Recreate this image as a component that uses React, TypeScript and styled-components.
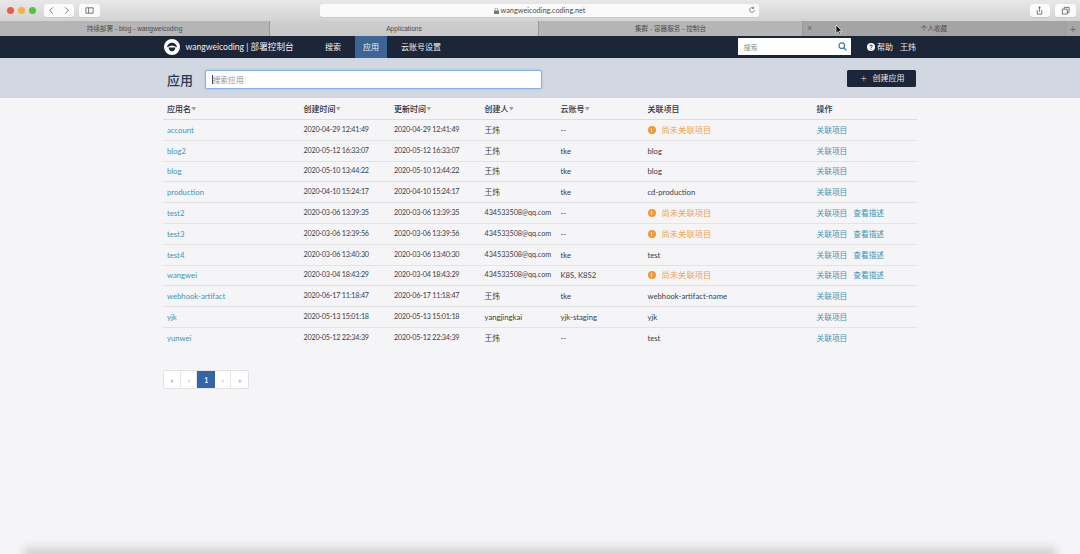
import React from 'react';
import styled, { createGlobalStyle } from 'styled-components';

const Global = createGlobalStyle`
  html, body { margin: 0; padding: 0; height: 100%; background: #f5f4f7; overflow: hidden; }
  #root { height: 100%; }
`;
const FONT = `Lato, "Noto Sans CJK SC", sans-serif`;

const Page = styled.div`
  position: relative; width: 1080px; height: 554px; overflow: hidden;
  display: flex; flex-direction: column; background: #f5f4f7; font-family: ${FONT}; color: #33383e;
`;
const Toolbar = styled.div`
  height: 21px; flex: none; display: flex; align-items: center; position: relative;
  background: linear-gradient(#e9e8e9, #d4d3d4); padding-left: 7px;
`;
const Light = styled.span<{ $c: string }>`
  width: 7px; height: 7px; border-radius: 50%; background: ${p => p.$c}; margin-right: 4px; flex: none;
`;
const ChromeBtn = styled.span<{ $w?: number; $ml?: number; $mr?: number; $r?: string }>`
  width: ${p => p.$w ?? 14.5}px; height: 12.5px; margin-left: ${p => p.$ml ?? 0}px; margin-right: ${p => p.$mr ?? 0}px;
  background: #fbfbfb; border-radius: ${p => p.$r ?? '2.5px'}; box-shadow: 0 0.5px 0.5px #b8b8b8;
  display: flex; align-items: center; justify-content: center; flex: none;
`;
const UrlBar = styled.div`
  position: absolute; left: 320px; top: 4px; width: 439px; height: 13px; background: #fafafa; border-radius: 2.5px;
  box-shadow: 0 0.5px 0.5px #bdbdbd; display: flex; align-items: center; justify-content: center; gap: 2px;
  font-size: 7.3px; color: #4e4e4e; font-family: Lato, sans-serif;
`;
const Reload = styled.span`
  position: absolute; right: 3px; top: 2px; display: flex;
`;
const RightBtns = styled.div`
  margin-left: auto; display: flex; gap: 5px; padding-right: 4px;
`;
const Tabs = styled.div`
  height: 15px; flex: none; display: flex; background: #b4b3b4; box-sizing: border-box;
`;
const Tab = styled.div<{ $w: number; $active?: boolean; $dark?: boolean }>`
  position: relative; width: ${p => p.$w}px; flex: none; display: flex; align-items: center; justify-content: center;
  font-size: 6.6px; line-height: 10px; color: #4c4c4c; font-family: "Liberation Sans", "Noto Sans CJK SC", sans-serif;
  background: ${p => p.$active ? 'linear-gradient(#cfcecf, #c8c7c8)' : p.$dark ? '#a5a4a5' : '#b6b5b6'};
  border-right: 0.5px solid #9c9b9c; box-sizing: border-box;
`;
const TabClose = styled.span`
  position: absolute; left: 4px; font-size: 9px; color: #666; line-height: 1;
`;
const NewTab = styled.div`
  flex: 1; display: flex; align-items: center; justify-content: center; background: #a8a7a8; color: #6d6d6d; font-size: 11px; line-height: 1;
`;
const Nav = styled.nav`
  height: 21.5px; flex: none; background: #1b2638; display: flex; align-items: stretch; gap: 6px; padding-left: 163px; color: #fff;
`;
const Brand = styled.div`
  display: flex; align-items: center; gap: 5.5px; font-size: 8.6px; line-height: 10px; width: 148px; flex: none; color: #eef0f3; padding-left: 1px; box-sizing: border-box;
`;
const NavItem = styled.div<{ $active?: boolean }>`
  display: flex; align-items: center; font-size: 8px; padding: 0 8px; line-height: 10px;
  background: ${p => p.$active ? '#3c6595' : 'transparent'}; color: #eef0f3; 
`;
const NavRight = styled.div`
  margin-left: auto; display: flex; align-items: center; padding-right: 164px; font-size: 8px; line-height: 10px; color: #eef0f3;
`;
const NavSearch = styled.div`
  width: 113px; height: 17px; background: #fff; display: flex; align-items: center; justify-content: space-between;
  padding: 0 4px 0 6px; box-sizing: border-box; color: #8d9096; font-size: 7px; margin-right: 16.5px;
`;
const Help = styled.span`
  display: flex; align-items: center; gap: 2px; margin-right: 7px;
`;
const SubHeader = styled.div`
  height: 40.5px; flex: none; box-sizing: border-box; background: #d1d8e1; display: flex; align-items: flex-start; padding: 12.5px 164px 0 167px;
`;
const Title = styled.h1`
  margin: 2px 0 0; font-size: 13px; line-height: 16px; font-weight: 500; color: #2b3a50; width: 38px; flex: none; 
`;
const SearchBox = styled.div`
  width: 337px; height: 19px; box-sizing: border-box; background: #fff; border: 1px solid #84b1e6; border-radius: 2px; 
  box-shadow: 0 0 2px #84b1e6; font-size: 7.8px; line-height: 10px; color: #90939a; display: flex; align-items: center; padding-left: 6px;
`;
const Caret = styled.span`
  width: 0.5px; height: 9px; background: #444;
`;
const CreateBtn = styled.button`
  margin: -0.5px 0 0 auto; width: 69px; height: 17px; background: #1b2638; border: 0; border-radius: 1.5px; color: #e6e8eb;
  font: 8px/10px ${FONT}; display: flex; align-items: center; justify-content: center; gap: 5.5px; padding: 0 0 0 2px;
`;
const Plus = styled.span`
  font-size: 11px; font-weight: 300;
`;
const Table = styled.div`
  margin: 0 163px;
`;
const Cols = '136.5px 90.5px 90.5px 76px 87px 169px 1fr';
const HeadRow = styled.div`
  display: grid; grid-template-columns: ${Cols}; height: 22px; align-items: center; border-bottom: 1.5px solid #dcdcdf;
  box-sizing: border-box; font-size: 8px; color: #2e3238; font-weight: 500;
`;
const Row = styled.div`
  display: grid; grid-template-columns: ${Cols}; height: 20.8px; align-items: center; border-bottom: 1px solid #e3e3e6;
  box-sizing: border-box; font-size: 7.7px; color: #3d4045;
  &:last-child { border-bottom: 0; }
`;
const Cell = styled.div<{ $compact?: boolean }>`
  padding-left: 4px; white-space: nowrap; display: flex; align-items: center; line-height: 10px;
  ${p => p.$compact ? 'font-size: 7.2px;' : ''}
`;
const DateCell = styled(Cell)`
  font-size: 7.2px; letter-spacing: -0.2px;
`;
const Sort = styled.span`
  font-size: 4.5px; color: #9a9da3; margin-left: 0.5px; margin-top: 1.5px;
`;
const Link = styled.a`
  color: #3f94b4; text-decoration: none; & + & { margin-left: 6px; }
`;
const Warn = styled.span`
  color: #f1a44c; display: flex; align-items: center; gap: 6px; font-size: 8.3px;
`;
const WarnDot = styled.span`
  width: 8px; height: 8px; border-radius: 50%; background: #ef9a35; color: #fff; font-size: 6px; font-weight: 700;
  display: flex; align-items: center; justify-content: center; line-height: 1;
`;
const Pager = styled.div`
  display: flex; margin: 21.5px 0 0 163px; width: 86px; height: 19px; background: #fff; border: 0.5px solid #e2e2e5; border-radius: 2px; box-sizing: border-box;
`;
const PageItem = styled.span<{ $active?: boolean; $w: number }>`
  width: ${p => p.$w}px; display: flex; align-items: center; justify-content: center; font-size: 7px;
  color: ${p => p.$active ? '#eaf0f7' : '#8a8c92'}; background: ${p => p.$active ? '#3465a4' : 'transparent'};
  font-weight: ${p => p.$active ? 700 : 400}; border-right: ${p => p.$active ? 0 : '0.5px solid #e6e6e8'};
  &:last-child { border-right: 0; }
`;
const BottomShadow = styled.div`
  position: absolute; left: 24px; right: 24px; bottom: -8px; height: 14px; background: #d0d0d0; filter: blur(5px);
`;
const Cursor = styled.svg`
  position: absolute; left: 835px; top: 24px;
`;

type R = { name: string; c: string; u: string; by: string; acc: string; proj: string | null; desc?: boolean };
const rows: R[] = [
  { name: 'account', c: '2020-04-29 12:41:49', u: '2020-04-29 12:41:49', by: '王炜', acc: '--', proj: null },
  { name: 'blog2', c: '2020-05-12 16:33:07', u: '2020-05-12 16:33:07', by: '王炜', acc: 'tke', proj: 'blog' },
  { name: 'blog', c: '2020-05-10 13:44:22', u: '2020-05-10 13:44:22', by: '王炜', acc: 'tke', proj: 'blog' },
  { name: 'production', c: '2020-04-10 15:24:17', u: '2020-04-10 15:24:17', by: '王炜', acc: 'tke', proj: 'cd-production' },
  { name: 'test2', c: '2020-03-06 13:39:35', u: '2020-03-06 13:39:35', by: '434533508@qq.com', acc: '--', proj: null, desc: true },
  { name: 'test3', c: '2020-03-06 13:39:56', u: '2020-03-06 13:39:56', by: '434533508@qq.com', acc: '--', proj: null, desc: true },
  { name: 'test4', c: '2020-03-06 13:40:30', u: '2020-03-06 13:40:30', by: '434533508@qq.com', acc: 'tke', proj: 'test', desc: true },
  { name: 'wangwei', c: '2020-03-04 18:43:29', u: '2020-03-04 18:43:29', by: '434533508@qq.com', acc: 'K8S, K8S2', proj: null, desc: true },
  { name: 'webhook-artifact', c: '2020-06-17 11:18:47', u: '2020-06-17 11:18:47', by: '王炜', acc: 'tke', proj: 'webhook-artifact-name' },
  { name: 'yjk', c: '2020-05-13 15:01:18', u: '2020-05-13 15:01:18', by: 'yangjingkai', acc: 'yjk-staging', proj: 'yjk' },
  { name: 'yunwei', c: '2020-05-12 22:34:39', u: '2020-05-12 22:34:39', by: '王炜', acc: '--', proj: 'test' },
];

const Logo = () => (
  <svg width="16" height="16" viewBox="0 0 17 17">
    <circle cx="8.5" cy="8.5" r="8.5" fill="#fff" />
    <path d="M3.2 9C3.6 5.6 5.8 4 8.5 4s4.9 1.6 5.3 5C12 7.8 10.2 7.3 8.5 7.3S5 7.8 3.2 9Z" fill="#1b2638" />
    <path d="M4.8 9h7.4l-.9 2.7c-.7.8-1.7 1.3-2.8 1.3s-2.1-.5-2.8-1.3Z" fill="#1b2638" />
  </svg>
);
const Ico = ({ d, w = 9 }: { d: string; w?: number }) => (
  <svg width={w} height={w} viewBox="0 0 10 10" fill="none" stroke="#4a4a4a" strokeWidth="0.8"><path d={d} /></svg>
);

export default function App() {
  return (
    <Page>
      <Global />
      <Toolbar>
        <Light $c="#f0584f" /><Light $c="#f4b33a" /><Light $c="#4ec544" />
        <ChromeBtn $ml={4} $r="2.5px 0 0 2.5px"><Ico d="M6.5 1.5 3 5l3.5 3.5" /></ChromeBtn>
        <ChromeBtn $ml={0.5} $mr={5} $r="0 2.5px 2.5px 0"><Ico d="M3.5 1.5 7 5 3.5 8.5" /></ChromeBtn>
        <ChromeBtn $w={21}><Ico d="M1 2h8v6H1zM4 2v6" /></ChromeBtn>
        <UrlBar>
          <svg width="5" height="6" viewBox="0 0 5 6"><rect y="2.4" width="5" height="3.6" rx=".5" fill="#777" /><path d="M1 2.6V1.6a1.5 1.5 0 0 1 3 0v1" fill="none" stroke="#777" strokeWidth=".7" /></svg>
          wangweicoding.coding.net
          <Reload><Ico d="M8 5a3 3 0 1 1-1-2.3M7 1v2H5" w={8} /></Reload>
        </UrlBar>
        <RightBtns>
          <ChromeBtn $w={20.5}><Ico d="M2.5 4.5v4.5h5V4.5M5 6.5V1M3.5 2.3 5 1l1.5 1.3" /></ChromeBtn>
          <ChromeBtn $w={21}><Ico d="M1.5 3.5h5.5v5.5H1.5zM3.5 3.5V1.5H9V7H7" /></ChromeBtn>
        </RightBtns>
      </Toolbar>
      <Tabs>
        <Tab $w={270}>持续部署 - blog - wangweicoding</Tab>
        <Tab $w={269} $active>Applications</Tab>
        <Tab $w={264}>集群 - 容器服务 - 控制台</Tab>
        <Tab $w={263} $dark><TabClose>×</TabClose>个人收藏</Tab>
        <NewTab>+</NewTab>
      </Tabs>
      <Nav>
        <Brand><Logo />wangweicoding | 部署控制台</Brand>
        <NavItem>搜索</NavItem>
        <NavItem $active>应用</NavItem>
        <NavItem>云账号设置</NavItem>
        <NavRight>
          <NavSearch>搜索
            <svg width="9" height="9" viewBox="0 0 10 10" fill="none" stroke="#3f7cb8" strokeWidth="1.4"><circle cx="4.2" cy="4.2" r="3.1" /><path d="M6.6 6.6 9.4 9.4" /></svg>
          </NavSearch>
          <Help>
            <svg width="8" height="8" viewBox="0 0 8 8"><circle cx="4" cy="4" r="4" fill="#fff" /><path d="M2.7 3.2C2.8 2.4 3.3 2 4 2s1.3.4 1.3 1.1c0 .9-1.3.9-1.3 1.8" fill="none" stroke="#1b2638" strokeWidth=".9" /><circle cx="4" cy="6.1" r=".55" fill="#1b2638" /></svg>
            帮助
          </Help>
          王炜
        </NavRight>
      </Nav>
      <SubHeader>
        <Title>应用</Title>
        <SearchBox><Caret />搜索应用</SearchBox>
        <CreateBtn><Plus>+</Plus>创建应用</CreateBtn>
      </SubHeader>
      <Table>
        <HeadRow>
          <Cell>应用名<Sort>▼</Sort></Cell>
          <Cell>创建时间<Sort>▼</Sort></Cell>
          <Cell>更新时间<Sort>▼</Sort></Cell>
          <Cell>创建人<Sort>▼</Sort></Cell>
          <Cell>云账号<Sort>▼</Sort></Cell>
          <Cell>关联项目</Cell>
          <Cell>操作</Cell>
        </HeadRow>
        {rows.map(r => (
          <Row key={r.name}>
            <Cell><Link>{r.name}</Link></Cell>
            <DateCell>{r.c}</DateCell>
            <DateCell>{r.u}</DateCell>
            <Cell $compact={r.by.includes('@')}>{r.by}</Cell>
            <Cell>{r.acc}</Cell>
            <Cell>{r.proj ?? <Warn><WarnDot>!</WarnDot>尚未关联项目</Warn>}</Cell>
            <Cell><Link>关联项目</Link>{r.desc && <Link>查看描述</Link>}</Cell>
          </Row>
        ))}
      </Table>
      <Pager>
        <PageItem $w={17}>«</PageItem>
        <PageItem $w={16}>‹</PageItem>
        <PageItem $w={19} $active>1</PageItem>
        <PageItem $w={16}>›</PageItem>
        <PageItem $w={17.5}>»</PageItem>
      </Pager>
      <BottomShadow />
      <Cursor width="8" height="12" viewBox="0 0 8 12"><path d="M1 1v8.5l2-2 1.3 3 1.3-.6-1.3-2.9H7Z" fill="#111" stroke="#fff" strokeWidth=".6" /></Cursor>
    </Page>
  );
}
